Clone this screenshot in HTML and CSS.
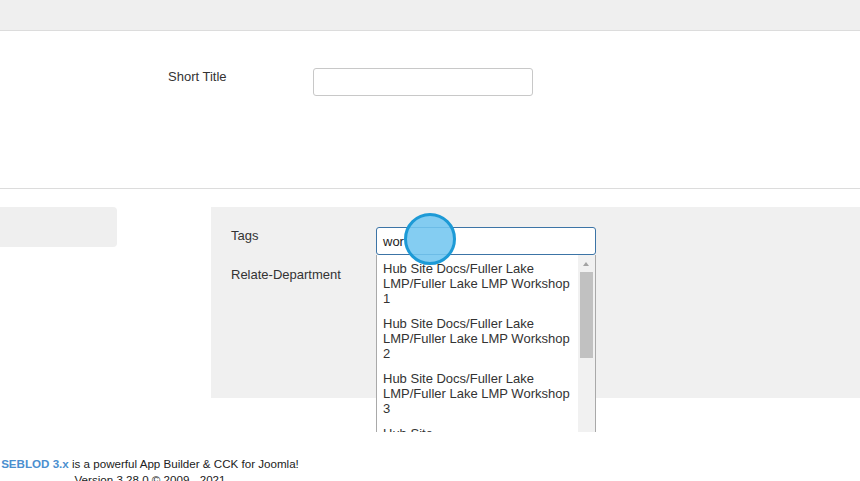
FILE: index.html
```html
<!DOCTYPE html>
<html>
<head>
<meta charset="utf-8">
<link rel="stylesheet" href="styles.css">
</head>
<body>
<div class="topbar"></div>
<div class="section-one">
  <div class="field-row">
    <label class="field-label">Short Title</label>
    <div class="text-input"></div>
  </div>
</div>
<div class="section-two">
  <div class="side-box"></div>
  <div class="panel">
    <div class="panel-row">
      <label class="field-label">Tags</label>
      <div class="tag-wrap">
        <div class="text-input focused">wor</div>
        <div class="dropdown">
          <ul class="options">
            <li>Hub Site Docs/Fuller Lake LMP/Fuller Lake LMP Workshop 1</li>
            <li>Hub Site Docs/Fuller Lake LMP/Fuller Lake LMP Workshop 2</li>
            <li>Hub Site Docs/Fuller Lake LMP/Fuller Lake LMP Workshop 3</li>
            <li>Hub Site</li>
          </ul>
          <div class="scrollbar">
            <div class="arrow"></div>
            <div class="thumb"></div>
          </div>
        </div>
      </div>
    </div>
    <div class="panel-row second">
      <label class="field-label">Relate-Department</label>
    </div>
  </div>
</div>
<div class="footer">
  <div><span class="brand">SEBLOD 3.x</span> is a powerful App Builder &amp; CCK for Joomla!</div>
  <div>Version 3.28.0 © 2009 - 2021</div>
</div>
<div class="click-marker"></div>
</body>
</html>
```
FILE: styles.css
```css
html, body {
  margin: 0;
  padding: 0;
  background: #fff;
}
body {
  font-family: "Liberation Sans", Arial, sans-serif;
  font-size: 13px;
  color: #333;
  width: 860px;
  height: 481px;
  overflow: hidden;
  position: relative;
}
.topbar {
  height: 30px;
  background: #efefef;
  border-bottom: 1px solid #dcdcdc;
}
.section-one {
  box-sizing: border-box;
  height: 158px;
  padding-top: 37px;
  border-bottom: 1px solid #dcdcdc;
}
.field-row {
  display: grid;
  grid-template-columns: 145px 220px;
  padding-left: 168px;
}
.field-label {
  display: block;
  line-height: 16px;
  padding-top: 1px;
  color: #333;
}
.text-input {
  box-sizing: border-box;
  width: 220px;
  height: 28px;
  border: 1px solid #c8c8c8;
  border-radius: 3px;
  background: #fff;
  padding: 0 6px;
  line-height: 26px;
  font-size: 13px;
  color: #222;
}
.text-input.focused {
  border-color: #3c74a6;
  padding-top: 1px;
}
.section-two {
  display: flex;
  margin-top: 18px;
  align-items: flex-start;
}
.side-box {
  width: 117px;
  height: 40px;
  background: #efefef;
  border-radius: 0 4px 4px 0;
}
.panel {
  margin-left: 94px;
  flex: 1;
  height: 191px;
  box-sizing: border-box;
  background: #f0f0f0;
  padding: 20px 20px 0 20px;
}
.panel-row {
  display: grid;
  grid-template-columns: 145px 220px;
}
.panel-row.second {
  margin-top: 11px;
}
.tag-wrap {
  position: relative;
}
.dropdown {
  position: absolute;
  top: 28px;
  left: 0;
  width: 220px;
  height: 177px;
  box-sizing: border-box;
  background: #fff;
  border-left: 1px solid #a9a9a9;
  border-right: 1px solid #a9a9a9;
  display: flex;
  overflow: hidden;
  z-index: 2;
}
.options {
  list-style: none;
  margin: 0;
  padding: 0;
  flex: 1;
}
.options li {
  padding: 6px 6px 4px 6px;
  line-height: 15px;
  font-size: 13px;
  color: #333;
}
.scrollbar {
  width: 17px;
  background: #f1f1f1;
  position: relative;
  flex-shrink: 0;
}
.arrow {
  position: absolute;
  top: 7px;
  left: 5px;
  width: 0;
  height: 0;
  border-left: 3.5px solid transparent;
  border-right: 3.5px solid transparent;
  border-bottom: 4px solid #a3a3a3;
}
.thumb {
  position: absolute;
  top: 17px;
  left: 2px;
  width: 13px;
  height: 86px;
  background: #c1c1c1;
}
.footer {
  margin-top: 58px;
  width: 300px;
  text-align: center;
  font-size: 11.6px;
  line-height: 16px;
  color: #222;
}
.brand {
  color: #4a8fcf;
  font-weight: bold;
}
.click-marker {
  position: absolute;
  left: 404px;
  top: 213px;
  width: 52px;
  height: 52px;
  box-sizing: border-box;
  border-radius: 50%;
  background: rgba(115, 198, 240, 0.88);
  border: 3px solid #1d9ad6;
  z-index: 5;
}
```
